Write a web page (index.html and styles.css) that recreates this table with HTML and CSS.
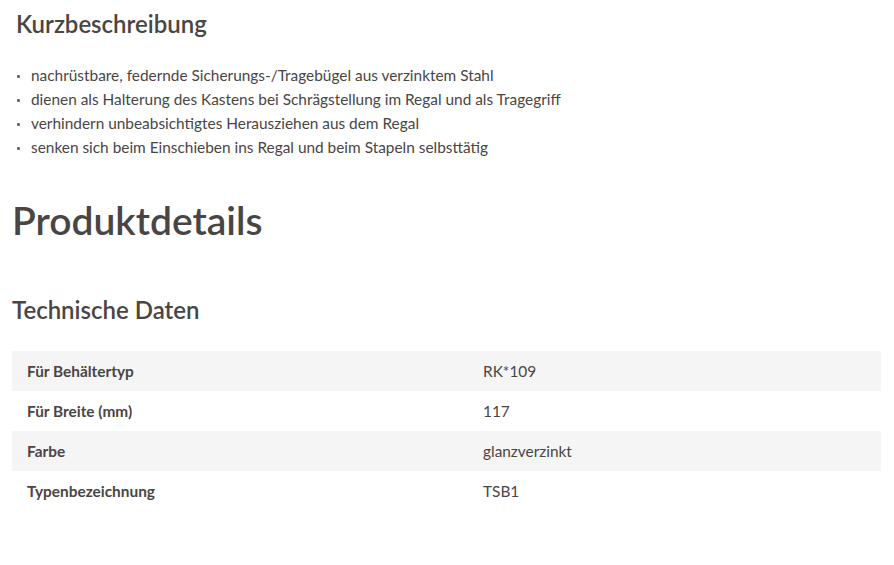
FILE: index.html
```html
<!DOCTYPE html>
<html lang="de">
<head>
<meta charset="utf-8">
<link rel="stylesheet" href="styles.css">
</head>
<body>
<div class="page">
  <section class="short">
    <h2 class="short-title">Kurzbeschreibung</h2>
    <ul class="bullets">
      <li>nachrüstbare, federnde Sicherungs-/Tragebügel aus verzinktem Stahl</li>
      <li>dienen als Halterung des Kastens bei Schrägstellung im Regal und als Tragegriff</li>
      <li>verhindern unbeabsichtigtes Herausziehen aus dem Regal</li>
      <li>senken sich beim Einschieben ins Regal und beim Stapeln selbsttätig</li>
    </ul>
  </section>
  <h1 class="details-title">Produktdetails</h1>
  <h2 class="tech-title">Technische Daten</h2>
  <table class="specs">
    <tr><th>Für Behältertyp</th><td>RK*109</td></tr>
    <tr><th>Für Breite (mm)</th><td>117</td></tr>
    <tr><th>Farbe</th><td>glanzverzinkt</td></tr>
    <tr><th>Typenbezeichnung</th><td>TSB1</td></tr>
  </table>
</div>
</body>
</html>
```

FILE: styles.css
```css
html, body {
  margin: 0;
  padding: 0;
  background: #fff;
}
body {
  font-family: Lato, "Open Sans", sans-serif;
  color: #4a4545;
  font-size: 15.4px;
}
.page {
  padding: 0 13px 0 12px;
}
.short {
  padding: 0 4px;
}
.short-title {
  margin: 0;
  padding-top: 8px;
  font-size: 24px;
  font-weight: 600;
  line-height: 32px;
}
.bullets {
  list-style: none;
  margin: 23px 0 0;
  padding: 0;
}
.bullets li {
  position: relative;
  padding-left: 15px;
  line-height: 24px;
}
.bullets li::before {
  content: "";
  position: absolute;
  left: 1px;
  top: 12px;
  width: 3px;
  height: 3px;
  border-radius: 1px;
  background: #6a6565;
}
.details-title {
  margin: 37px 0 0;
  font-size: 39px;
  font-weight: 600;
  line-height: 48px;
}
.tech-title {
  margin: 50px 0 0;
  font-size: 24px;
  font-weight: 600;
  line-height: 32px;
}
.specs {
  width: 100%;
  margin-top: 25px;
  border-collapse: collapse;
}
.specs tr:nth-child(odd) {
  background: #f5f5f5;
}
.specs th, .specs td {
  height: 40px;
  padding: 0 15px;
  text-align: left;
  vertical-align: middle;
  line-height: 20px;
}
.specs th {
  width: 426px;
  font-weight: 700;
}
.specs td {
  font-weight: 400;
}
```
